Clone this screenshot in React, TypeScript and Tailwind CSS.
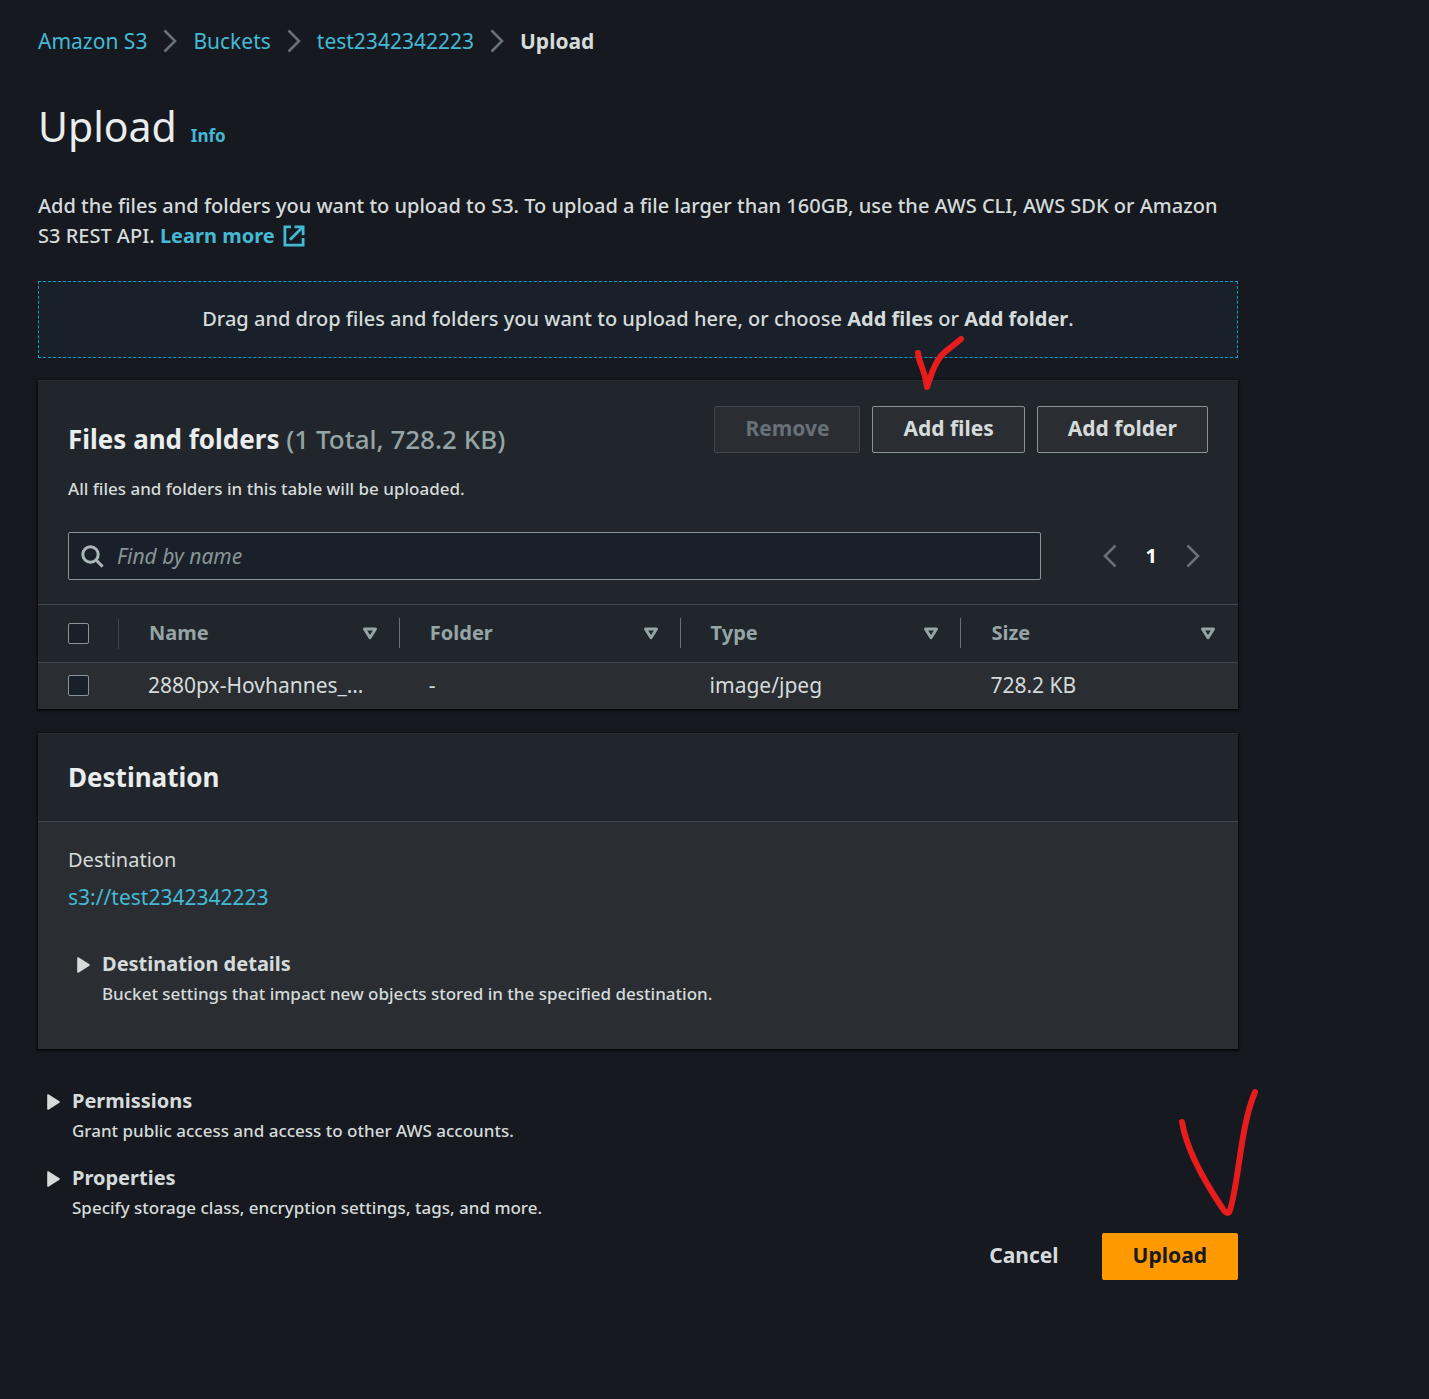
import { useState, type ReactNode } from 'react';

function Chevron({ left = false }: { left?: boolean }) {
  return (
    <svg aria-hidden="true" width="14" height="24" viewBox="0 0 14 24" fill="none" stroke="#687078" strokeWidth="2.6" className="shrink-0">
      {left ? <path d="M12.5 1.5 2 12l10.5 10.5" /> : <path d="M1.5 1.5 12 12 1.5 22.5" />}
    </svg>
  );
}

function ExternalIcon() {
  return (
    <svg aria-hidden="true" width="22" height="22" viewBox="0 0 22 22" fill="none" stroke="currentColor" strokeWidth="2.8" className="ml-2 inline-block align-[-4px]">
      <path d="M8 1.9H1.9v18.2h18.2V13" />
      <path d="M11.5 1.9h8.6v8.3" />
      <path d="M7 14.8 19.5 2.2" />
    </svg>
  );
}

function SearchIcon() {
  return (
    <svg aria-hidden="true" width="24" height="24" viewBox="0 0 24 24" fill="none" stroke="#aab7b8" strokeWidth="3" className="shrink-0">
      <circle cx="10.5" cy="10.5" r="7.7" />
      <path d="m15.8 15.8 6.8 6.8" />
    </svg>
  );
}

function SortIcon() {
  return (
    <svg aria-hidden="true" width="16" height="13" viewBox="0 0 16 13" fill="none" stroke="#95a5a6" strokeWidth="3" strokeLinejoin="round">
      <path d="M2.5 2h11L8 10.8z" />
    </svg>
  );
}

function Caret() {
  return (
    <svg aria-hidden="true" width="13" height="16" viewBox="0 0 13 16" fill="#d5dbdb" stroke="#d5dbdb" strokeWidth="1.6" strokeLinejoin="round" className="mt-2 shrink-0">
      <path d="M1 1v14L12 8z" />
    </svg>
  );
}

function Expandable({ title, text }: { title: string; text: string }) {
  const [open, setOpen] = useState(false);
  return (
    <section className="pl-[9px]">
      <button type="button" aria-expanded={open} onClick={() => setOpen(!open)} className="flex items-start gap-3 text-left">
        <Caret />
        <span>
          <span className="block text-[20px] leading-[30px] font-bold">{title}</span>
          <span className="block text-[17px] leading-[30px] font-medium">{text}</span>
        </span>
      </button>
    </section>
  );
}

function OutlineButton({ children, disabled = false }: { children: ReactNode; disabled?: boolean }) {
  return (
    <button
      type="button"
      disabled={disabled}
      className="h-[47px] rounded-[2px] border border-[#879596] bg-[#2a2e33] px-[30px] pb-[3px] text-[21px] leading-[30px] font-bold whitespace-nowrap text-[#d5dbdb] disabled:border-[#414750] disabled:text-[#687078]"
    >
      {children}
    </button>
  );
}

function Tick({ label }: { label: string }) {
  return (
    <input
      type="checkbox"
      aria-label={label}
      className="block size-[21px] appearance-none rounded-[2px] border border-[#879596] bg-[#1a2029] checked:bg-[#44b9d6]"
    />
  );
}

const panel = 'border-t border-[#2a2e33] shadow-[0_1px_2px_1px_#000000b0]';
const columns = ['Name', 'Folder', 'Type', 'Size'];
const row = ['2880px-Hovhannes_…', '-', 'image/jpeg', '728.2 KB'];

export default function App() {
  return (
    <div className="min-h-screen bg-[#16191f] px-[38px] pt-[26px] pb-[119px] font-['Noto_Sans',sans-serif] text-[20px] leading-[30px] text-[#d5dbdb]">
      <main className="max-w-[1200px]">
        <nav aria-label="Breadcrumbs" className="text-[21px]">
          <ol className="flex items-center gap-4">
            <li><a href="#s3" className="text-[#44b9d6]">Amazon S3</a></li>
            <li><Chevron /></li>
            <li><a href="#buckets" className="text-[#44b9d6]">Buckets</a></li>
            <li><Chevron /></li>
            <li><a href="#bucket" className="text-[#44b9d6]">test2342342223</a></li>
            <li><Chevron /></li>
            <li aria-current="page" className="font-bold">Upload</li>
          </ol>
        </nav>

        <header className="mt-[43px] flex items-baseline gap-[14px]">
          <h1 className="text-[41px] leading-[54px] text-[#eaeded]">Upload</h1>
          <a href="#info" className="text-[17px] font-bold text-[#44b9d6]">Info</a>
        </header>

        <p className="mt-[38px] pr-2 font-medium">
          Add the files and folders you want to upload to S3. To upload a file larger than 160GB, use the AWS CLI, AWS SDK or Amazon S3 REST API.{' '}
          <a href="#learn" className="font-bold whitespace-nowrap text-[#44b9d6]">Learn more<ExternalIcon /></a>
        </p>

        <div className="mt-[30px] border border-dashed border-[#00a1c9] bg-[#1a2029] pt-[22px] pb-[23px] text-center font-medium">
          Drag and drop files and folders you want to upload here, or choose <b>Add files</b> or <b>Add folder</b>.
        </div>

        <section className={`mt-[22px] bg-[#21252c] ${panel}`}>
          <div className="flex items-start justify-between px-[30px] pt-[25px]">
            <div>
              <h2 className="mt-[15px] text-[26px] leading-[36px] font-bold text-[#eaeded]">
                Files and folders <span className="font-medium text-[#95a5a6]">(1 Total, 728.2 KB)</span>
              </h2>
              <p className="mt-[17px] text-[17px] font-medium">All files and folders in this table will be uploaded.</p>
            </div>
            <div className="flex gap-3">
              <OutlineButton disabled>Remove</OutlineButton>
              <div className="relative">
                <OutlineButton>Add files</OutlineButton>
                <svg aria-hidden="true" width="52" height="56" viewBox="0 0 52 56" fill="none" stroke="#e81c1c" strokeWidth="6" strokeLinecap="round" strokeLinejoin="round" className="pointer-events-none absolute -top-[71px] left-[42px]">
                  <path d="M4 18c1 12 7 15 9 34 3-7 5-20 14-31C32 15 39 11 47 4" />
                </svg>
              </div>
              <OutlineButton>Add folder</OutlineButton>
            </div>
          </div>

          <div className="flex items-center px-[30px] pt-7 pb-6">
            <label className="flex h-12 flex-1 items-center gap-[13px] rounded-[2px] border border-[#879596] bg-[#1a2029] px-[11px]">
              <SearchIcon />
              <input type="search" aria-label="Find by name" placeholder="Find by name" className="min-w-0 flex-1 bg-transparent text-[21px] italic outline-none placeholder:text-[#879596]" />
            </label>
            <nav aria-label="Pagination" className="mr-2 ml-[62px] flex items-center gap-[29px]">
              <button type="button" aria-label="Previous page"><Chevron left /></button>
              <button type="button" aria-current="page" className="font-bold text-white">1</button>
              <button type="button" aria-label="Next page"><Chevron /></button>
            </nav>
          </div>

          <table className="w-full table-fixed border-collapse text-left">
            <thead>
              <tr className="h-[58px] border-y border-[#414750]">
                <th className="w-[81px] p-0">
                  <div className="flex h-[30px] items-center border-r border-[#414750] pl-[30px]"><Tick label="Select all" /></div>
                </th>
                {columns.map((c, i) => (
                  <th key={c} className={`p-0 pb-px text-[#95a5a6] ${i < 3 ? 'w-[23.4%]' : ''}`}>
                    <button type="button" className={`flex h-[30px] w-full items-center justify-between pl-[30px] font-bold ${i < 3 ? 'border-r border-[#687078] pr-[21px]' : 'pr-[22px]'}`}>
                      {c}
                      <SortIcon />
                    </button>
                  </th>
                ))}
              </tr>
            </thead>
            <tbody>
              <tr className="h-[46px] bg-[#2a2e33] text-[21px]">
                <td className="p-0 pl-[30px]"><Tick label="Select 2880px-Hovhannes" /></td>
                {row.map((v) => (
                  <td key={v} className="p-0 pb-px pl-[29px] whitespace-nowrap">{v}</td>
                ))}
              </tr>
            </tbody>
          </table>
        </section>

        <section className={`mt-6 bg-[#2a2e33] ${panel}`}>
          <div className="border-b border-[#414750] bg-[#21252c] px-[30px] pt-[25px] pb-[26px]">
            <h2 className="text-[26px] leading-[36px] font-bold text-[#eaeded]">Destination</h2>
          </div>
          <div className="px-[30px] pt-[23px] pb-[40px]">
            <p>Destination</p>
            <p className="mt-[7px] text-[21px]"><a href="#dest" className="text-[#44b9d6]">s3://test2342342223</a></p>
            <div className="mt-[37px]">
              <Expandable title="Destination details" text="Bucket settings that impact new objects stored in the specified destination." />
            </div>
          </div>
        </section>

        <div className="mt-[37px] flex flex-col gap-[17px]">
          <Expandable title="Permissions" text="Grant public access and access to other AWS accounts." />
          <Expandable title="Properties" text="Specify storage class, encryption settings, tags, and more." />
        </div>

        <div className="mt-[10px] flex justify-end gap-3 text-[21px]">
          <button type="button" className="h-[47px] px-[31px] pb-[2px] font-bold">Cancel</button>
          <div className="relative">
            <button type="button" className="h-[47px] rounded-[2px] bg-[#ff9900] px-[31px] pb-[2px] font-bold text-[#16191f]">Upload</button>
            <svg aria-hidden="true" width="84" height="132" viewBox="0 0 84 132" fill="none" stroke="#e81c1c" strokeWidth="6" strokeLinecap="round" strokeLinejoin="round" className="pointer-events-none absolute -top-[147px] left-[76px]">
              <path d="M4 36C8 60 24 92 45 123c3 5 6 5 7 1C61 96 62 42 77 6" />
            </svg>
          </div>
        </div>
      </main>
    </div>
  );
}
